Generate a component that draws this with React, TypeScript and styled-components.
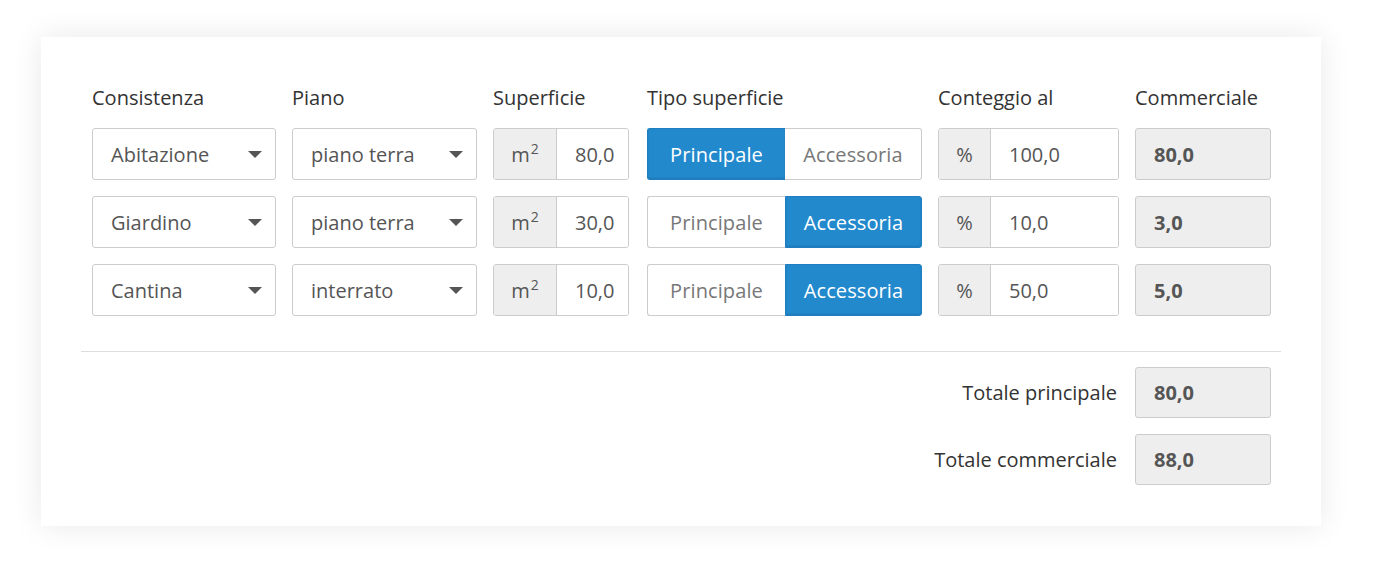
import styled, { createGlobalStyle } from 'styled-components'

const GlobalStyle = createGlobalStyle`
  body {
    margin: 0;
    background: #ffffff;
    font-family: 'Open Sans', 'Liberation Sans', sans-serif;
  }
`

const Panel = styled.div`
  width: 1280px;
  box-sizing: border-box;
  margin: 37px 0 42px 41px;
  padding: 47px 40px 41px;
  background: #ffffff;
  box-shadow: 0 0 30px rgba(0, 0, 0, 0.09);
`

const Table = styled.div`
  display: grid;
  grid-template-columns: 184px 185px 136px 277px 181px 136px;
  column-gap: 16px;
  row-gap: 16px;
  padding: 0 10px 0 11px;
  grid-template-rows: 28px 52px 52px 52px;
`

const Header = styled.div<{ $shift?: number }>`
  font-size: 20px;
  line-height: 28px;
  color: #333;
  white-space: nowrap;
  margin-left: ${(p) => p.$shift ?? 0}px;
`

const Select = styled.div`
  display: flex;
  align-items: center;
  justify-content: space-between;
  box-sizing: border-box;
  height: 52px;
  padding: 0 13px 0 18px;
  border: 1px solid #ccc;
  border-radius: 3px;
  background: #fff;
  font-size: 20px;
  color: #555;
`

const Caret = styled.span`
  width: 0;
  height: 0;
  border-left: 7px solid transparent;
  border-right: 7px solid transparent;
  border-top: 7px solid #555;
`

const Group = styled.div<{ $addon: number }>`
  display: grid;
  grid-template-columns: ${(p) => p.$addon}px 1fr;
  height: 52px;
  box-sizing: border-box;
  border: 1px solid #ccc;
  border-radius: 3px;
  overflow: hidden;
  font-size: 20px;
  color: #555;
`

const Addon = styled.div`
  display: flex;
  align-items: center;
  justify-content: center;
  background: #eee;
  border-right: 1px solid #ccc;
  color: #555;

  sup {
    font-size: 14px;
    line-height: 0;
    position: relative;
    top: -5px;
    margin-left: 1px;
  }
`

const Value = styled.div`
  display: flex;
  align-items: center;
  padding-left: 18px;
  background: #fff;
`

const Toggle = styled.div`
  display: grid;
  grid-template-columns: 138px 1fr;
  margin-left: 2px;
  height: 52px;
`

const ToggleButton = styled.div<{ $active: boolean; $side: 'left' | 'right' }>`
  display: flex;
  align-items: center;
  justify-content: center;
  box-sizing: border-box;
  font-size: 20px;
  letter-spacing: 0.1px;
  border: 1px solid ${(p) => (p.$active ? '#1e7ebf' : '#ccc')};
  background: ${(p) => (p.$active ? '#2389cd' : '#fff')};
  color: ${(p) => (p.$active ? '#fff' : '#777')};
  box-shadow: ${(p) => (p.$active ? 'inset 0 -1px 2px rgba(0, 0, 0, 0.12)' : 'none')};
  border-radius: ${(p) => (p.$side === 'left' ? '3px 0 0 3px' : '0 3px 3px 0')};
  ${(p) => (p.$side === 'left' ? 'border-right: none;' : '')}
  ${(p) => (p.$side === 'right' && !p.$active ? 'border-left: none;' : '')}
`

const Result = styled.div`
  display: flex;
  align-items: center;
  box-sizing: border-box;
  height: 52px;
  padding-left: 18px;
  border: 1px solid #ccc;
  border-radius: 3px;
  background: #eee;
  font-size: 20px;
  font-weight: 700;
  color: #555;
`

const Divider = styled.hr`
  border: none;
  border-top: 1px solid #ddd;
  margin: 35px 0 15px;
`

const Totals = styled.div`
  display: flex;
  flex-direction: column;
  align-items: flex-end;
  gap: 16px;
  padding-right: 10px;
`

const TotalRow = styled.div`
  display: flex;
  align-items: center;
  gap: 18px;
`

const TotalLabel = styled.span`
  font-size: 20px;
  color: #333;
`

const TotalBox = styled(Result)`
  width: 136px;
  height: 51px;
`

const rows = [
  { cons: 'Abitazione', piano: 'piano terra', sup: '80,0', principale: true, perc: '100,0', comm: '80,0' },
  { cons: 'Giardino', piano: 'piano terra', sup: '30,0', principale: false, perc: '10,0', comm: '3,0' },
  { cons: 'Cantina', piano: 'interrato', sup: '10,0', principale: false, perc: '50,0', comm: '5,0' },
]

export default function App() {
  return (
    <>
      <GlobalStyle />
      <Panel>
        <Table>
          <Header>Consistenza</Header>
          <Header>Piano</Header>
          <Header>Superficie</Header>
          <Header $shift={2}>Tipo superficie</Header>
          <Header>Conteggio al</Header>
          <Header>Commerciale</Header>
          {rows.flatMap((r) => [
            <Select key={r.cons + 'c'}>
              {r.cons}
              <Caret />
            </Select>,
            <Select key={r.cons + 'p'}>
              {r.piano}
              <Caret />
            </Select>,
            <Group $addon={63} key={r.cons + 's'}>
              <Addon>
                m<sup>2</sup>
              </Addon>
              <Value>{r.sup}</Value>
            </Group>,
            <Toggle key={r.cons + 't'}>
              <ToggleButton $active={r.principale} $side='left'>
                Principale
              </ToggleButton>
              <ToggleButton $active={!r.principale} $side='right'>
                Accessoria
              </ToggleButton>
            </Toggle>,
            <Group $addon={52} key={r.cons + 'g'}>
              <Addon>%</Addon>
              <Value>{r.perc}</Value>
            </Group>,
            <Result key={r.cons + 'r'}>{r.comm}</Result>,
          ])}
        </Table>
        <Divider />
        <Totals>
          <TotalRow>
            <TotalLabel>Totale principale</TotalLabel>
            <TotalBox>80,0</TotalBox>
          </TotalRow>
          <TotalRow>
            <TotalLabel>Totale commerciale</TotalLabel>
            <TotalBox>88,0</TotalBox>
          </TotalRow>
        </Totals>
      </Panel>
    </>
  )
}
